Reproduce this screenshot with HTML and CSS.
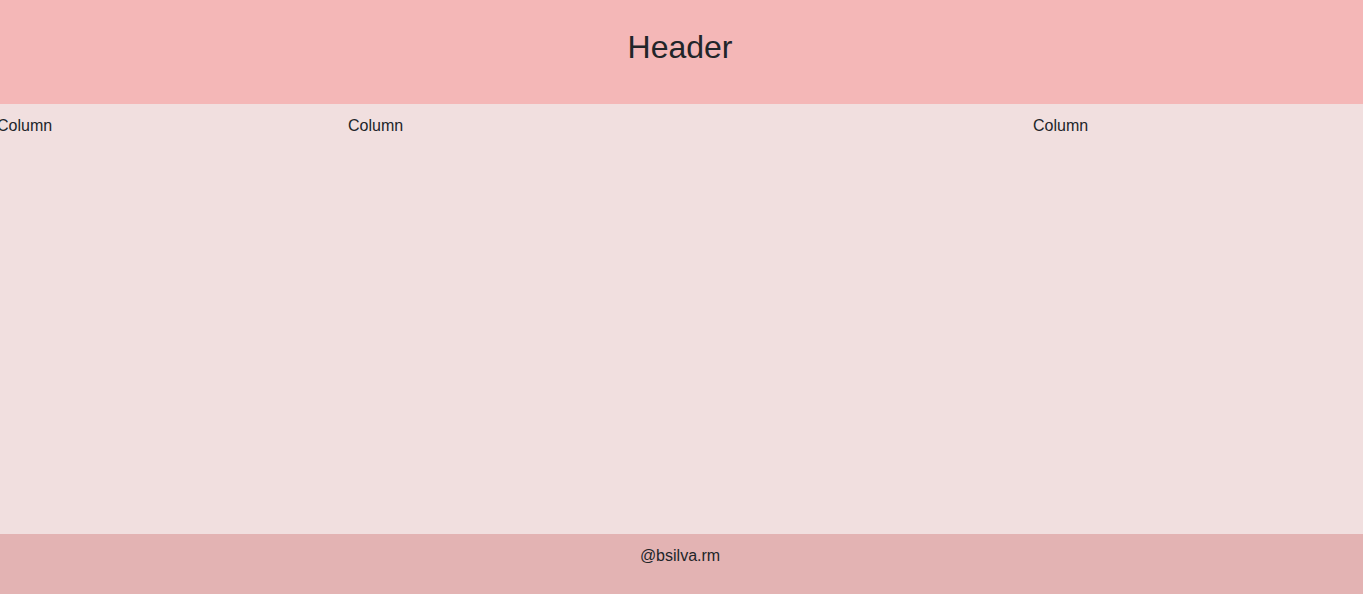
FILE: index.html
```html
<!DOCTYPE html>
<html lang="en">
<head>
<meta charset="utf-8">
<title>Layout</title>
<link rel="stylesheet" href="styles.css">
</head>
<body>
  <header class="site-header">
    <h1 class="site-title">Header</h1>
  </header>
  <main class="columns">
    <div class="column">Column</div>
    <div class="column">Column</div>
    <div class="column">Column</div>
  </main>
  <footer class="site-footer">@bsilva.rm</footer>
</body>
</html>
```

FILE: styles.css
```css
html, body {
  margin: 0;
  padding: 0;
  background: #ffffff;
}
body {
  font-family: "Liberation Sans", Arial, sans-serif;
  font-size: 16px;
  color: #212529;
  overflow: hidden;
}
.site-header {
  box-sizing: border-box;
  height: 104px;
  padding: 29px 3px 0 0;
  background: #f4b7b7;
  text-align: center;
}
.site-title {
  margin: 0;
  font-size: 32px;
  font-weight: 400;
  line-height: normal;
}
.columns {
  box-sizing: border-box;
  height: 430px;
  padding-top: 13px;
  background: #f1dfdf;
  display: grid;
  grid-template-columns: 351px 685px 1fr;
  margin-left: -3px;
}
.column {
  line-height: normal;
}
.site-footer {
  box-sizing: border-box;
  height: 60px;
  padding: 13px 3px 0 0;
  background: #e3b3b3;
  text-align: center;
  line-height: normal;
}
```
